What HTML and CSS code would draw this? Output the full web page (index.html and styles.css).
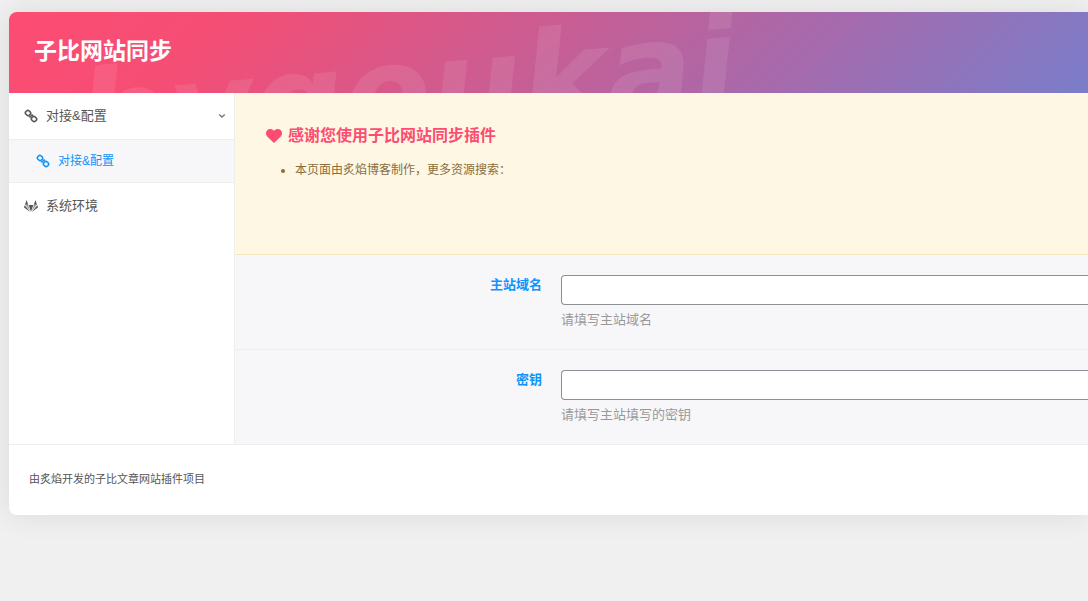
FILE: index.html
```html
<!DOCTYPE html>
<html lang="zh-CN">
<head>
<meta charset="utf-8">
<meta name="viewport" content="width=device-width, initial-scale=1">
<title>子比网站同步</title>
<link rel="stylesheet" href="styles.css">
</head>
<body>
<svg class="sprite" aria-hidden="true">
  <symbol id="link" viewBox="0 0 14 14"><g fill="none" stroke="currentColor" stroke-width="1.6"><rect x="1.500" y="1.700" width="5" height="4.600" rx="1.900" transform="rotate(45 4 4)"/><rect x="7.500" y="7.700" width="5" height="4.600" rx="1.900" transform="rotate(45 10 10)"/><path d="M5 7.600q1.400.7 2.200-.4M7 6.900q.8-1.200 2.100-.5"/></g></symbol>
  <symbol id="fox" viewBox="0 0 14 14"><g fill="currentColor"><path d="M2.600 1L1 5.700h3.200zM11.400 1L13 5.700H9.800zM4.700 6h4.600L7 12.800z"/><path d="M.8 6L0 8.400l6.300 4.500L1.700 7.400zM13.200 6l.8 2.400-6.300 4.500 4.600-5.500z"/><path d="M1.500 6h2.600l2.200 6.200zM12.500 6H9.900l-2.200 6.200z" opacity=".55"/></g></symbol>
</svg>
<div class="card">
  <header class="header">
    <svg class="watermark" aria-hidden="true"><text x="72" y="152" transform="rotate(-5 72 152)">bygoukai</text></svg>
    <h1 class="title">子比网站同步</h1>
  </header>
  <div class="body">
    <nav class="nav">
      <a class="nav-item" href="#config"><svg class="icon"><use href="#link"/></svg>对接&amp;配置<svg class="chevron" viewBox="0 0 8 6"><path d="M1.200 1.500L4 4l2.800-2.500"/></svg></a>
      <a class="nav-item nav-sub" href="#config"><svg class="icon"><use href="#link"/></svg>对接&amp;配置</a>
      <a class="nav-item" href="#system"><svg class="icon"><use href="#fox"/></svg>系统环境</a>
    </nav>
    <main class="content" id="config">
      <section class="notice">
        <h2 class="notice-title"><svg class="heart" viewBox="0 0 16 14"><path d="M8 14L1.400 7.800C-.5 5.800-.4 2.600 1.200 1.200 3.200-.6 6.300-.3 8 2 9.700-.3 12.800-.6 14.800 1.200c1.600 1.400 1.700 4.600-.2 6.600z"/></svg>感谢您使用子比网站同步插件</h2>
        <ul class="notice-list"><li>本页面由炙焰博客制作，更多资源搜索：</li></ul>
      </section>
      <form>
        <div class="field">
          <label class="label" for="domain">主站域名</label>
          <div class="control"><input class="input" id="domain" type="text" aria-describedby="domain-help"><p class="help" id="domain-help">请填写主站域名</p></div>
        </div>
        <div class="field">
          <label class="label" for="key">密钥</label>
          <div class="control"><input class="input" id="key" type="text" aria-describedby="key-help"><p class="help" id="key-help">请填写主站填写的密钥</p></div>
        </div>
      </form>
    </main>
  </div>
  <footer class="footer">由炙焰开发的子比文章网站插件项目</footer>
</div>
</body>
</html>
```
FILE: styles.css
```css
* { box-sizing: border-box; }
body {
  margin: 0;
  padding: 12px 0 40px 9px;
  overflow-x: hidden;
  background: #f0f0f1;
  color: #555;
  font: 13px/20px "Liberation Sans", "Noto Sans CJK SC", sans-serif;
}
h1, h2, p, ul { margin: 0; }
.sprite { position: absolute; width: 0; height: 0; }
.card {
  background: #fff;
  border-radius: 8px 0 0 8px;
  box-shadow: 0 0 30px rgba(0, 0, 0, .09);
}
.header {
  position: relative;
  overflow: hidden;
  padding: 21px 25px 24px;
  border-radius: 8px 0 0;
  background: linear-gradient(135deg, #fd4c73 0%, #f44e75 20%, #a66aac 72%, #777fcd 102%);
}
.watermark { position: absolute; inset: 0; width: 100%; height: 100%; }
.watermark text {
  font: italic bold 128px "DejaVu Sans", sans-serif;
  fill: rgba(255, 255, 255, .09);
}
.title { position: relative; color: #fff; font-size: 23px; line-height: 36px; font-weight: 700; }
.body { display: flex; }
.nav { flex: none; width: 226px; border-right: 1px solid #eee; }
.nav-item {
  display: flex;
  align-items: center;
  gap: 8px;
  height: 46px;
  padding: 0 8px 0 15px;
  color: #555;
  text-decoration: none;
}
.nav-sub {
  height: 44px;
  padding-left: 27px;
  border-top: 1px solid #eee;
  border-bottom: 1px solid #eee;
  background: #f7f7fa;
  color: #1094fb;
  font-size: 12px;
}
.icon { width: 14px; height: 14px; }
.chevron { width: 8px; height: 6px; margin-left: auto; fill: none; stroke: #777; stroke-width: 1.4; }
.content { flex: 1; min-width: 0; background: #f7f7fa; }
.notice {
  min-height: 162px;
  padding: 32px 31px;
  border-bottom: 1px solid #f5e9c0;
  background: #fef7e3;
  color: #8a6d3b;
}
.notice-title { display: flex; align-items: center; gap: 6px; color: #fd4c73; font-size: 16px; line-height: 22px; }
.heart { width: 16px; height: 14px; fill: currentColor; }
.notice-list { margin-top: 13px; padding-left: 29px; font-size: 12px; }
.field { display: grid; grid-template-columns: 36% 1fr; column-gap: 19px; padding: 20px 0 19px; border-bottom: 1px solid #eee; }
.field:last-child { border-bottom: 0; }
.label { color: #1094fb; font-weight: 700; text-align: right; }
.control { min-width: 0; }
.input {
  display: block;
  width: 100%;
  height: 30px;
  padding: 0 8px;
  border: 1px solid #8c8f94;
  border-right: 0;
  border-radius: 4px 0 0 4px;
  background: #fff;
  font: inherit;
}
.help { padding: 5px 0 0; color: #999; }
.footer { padding: 24px 20px 26px; border-top: 1px solid #eee; font-size: 11px; }
```
